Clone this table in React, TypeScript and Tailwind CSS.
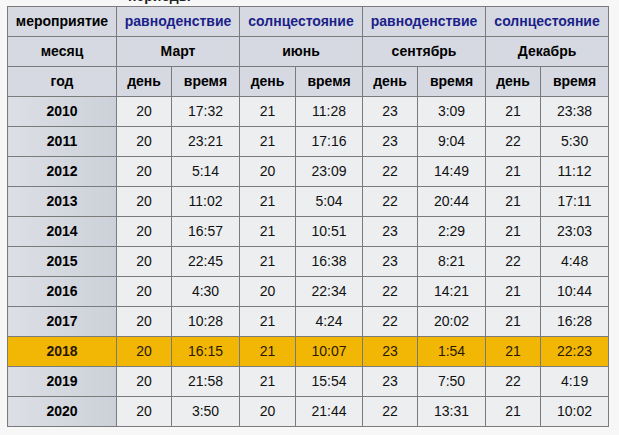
const events = [
  { name: "равноденствие", month: "Март" },
  { name: "солнцестояние", month: "июнь" },
  { name: "равноденствие", month: "сентябрь" },
  { name: "солнцестояние", month: "Декабрь" },
];

const rows: [string, string, string, string, string, string, string, string, string][] = [
  ["2010", "20", "17:32", "21", "11:28", "23", "3:09", "21", "23:38"],
  ["2011", "20", "23:21", "21", "17:16", "23", "9:04", "22", "5:30"],
  ["2012", "20", "5:14", "20", "23:09", "22", "14:49", "21", "11:12"],
  ["2013", "20", "11:02", "21", "5:04", "22", "20:44", "21", "17:11"],
  ["2014", "20", "16:57", "21", "10:51", "23", "2:29", "21", "23:03"],
  ["2015", "20", "22:45", "21", "16:38", "23", "8:21", "22", "4:48"],
  ["2016", "20", "4:30", "20", "22:34", "22", "14:21", "21", "10:44"],
  ["2017", "20", "10:28", "21", "4:24", "22", "20:02", "21", "16:28"],
  ["2018", "20", "16:15", "21", "10:07", "23", "1:54", "21", "22:23"],
  ["2019", "20", "21:58", "21", "15:54", "23", "7:50", "22", "4:19"],
  ["2020", "20", "3:50", "20", "21:44", "22", "13:31", "21", "10:02"],
];

const widths = [109, 55, 68, 56, 67, 55, 68, 55, 68];

const cell = "border border-[#7b7b7b] text-center align-middle p-0";
const head = `${cell} bg-[#d6d9e1] font-bold text-[14px] text-black`;

export default function App() {
  return (
    <div
      className="w-[619px] h-[435px] overflow-hidden bg-[#f7f7f7]"
      style={{ fontFamily: '"Liberation Sans", Arial, sans-serif' }}
    >
      {/* caption above the table, mostly scrolled out of view */}
      <div className="h-[6px] overflow-hidden relative">
        <div className="absolute left-[128px] top-[-14px] text-[14px] font-bold text-[#222] whitespace-nowrap">
          периоды
        </div>
      </div>
      <table className="ml-[7px] border-collapse table-fixed w-[601px]">
        <colgroup>
          {widths.map((w, i) => (
            <col key={i} style={{ width: w }} />
          ))}
        </colgroup>
        <tbody>
          <tr className="h-[30px]">
            <td className={head}>мероприятие</td>
            {events.map((e, i) => (
              <td key={i} colSpan={2} className={`${head} !text-[#1b1f8a]`}>
                {e.name}
              </td>
            ))}
          </tr>
          <tr className="h-[30px]">
            <td className={head}>месяц</td>
            {events.map((e, i) => (
              <td key={i} colSpan={2} className={head}>
                {e.month}
              </td>
            ))}
          </tr>
          <tr className="h-[30px]">
            <td className={head}>год</td>
            {events.map((_, i) => [
              <td key={`d${i}`} className={head}>день</td>,
              <td key={`t${i}`} className={head}>время</td>,
            ])}
          </tr>
          {rows.map((r) => {
            const hl = r[0] === "2018";
            return (
              <tr key={r[0]} className="h-[30px]">
                {r.map((v, j) => (
                  <td
                    key={j}
                    className={`${cell} text-[14px] ${
                      hl
                        ? "bg-[#f2b705] text-[#2a1800]"
                        : j === 0
                        ? "bg-gradient-to-r from-[#dcdfe5] to-[#ccd0d8] text-black"
                        : "bg-[#eceef0] text-[#111]"
                    } ${j === 0 ? "font-bold" : ""}`}
                  >
                    {v}
                  </td>
                ))}
              </tr>
            );
          })}
        </tbody>
      </table>
    </div>
  );
}
